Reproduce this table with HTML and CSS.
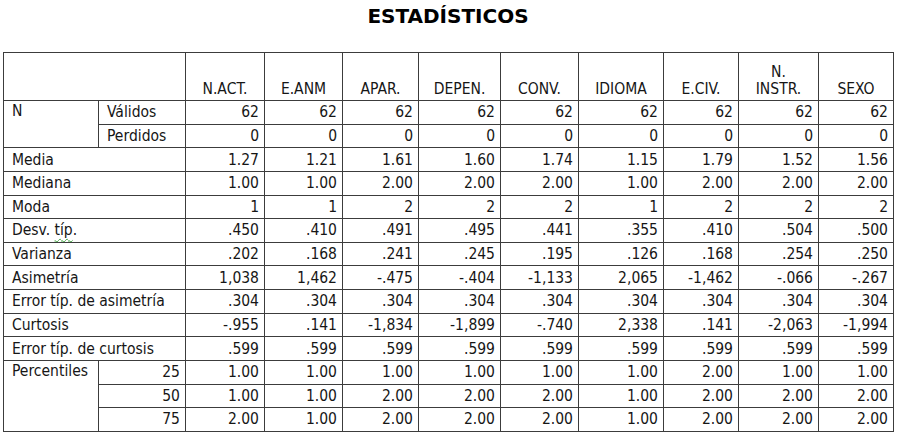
FILE: index.html
```html
<!DOCTYPE html>
<html lang="es">
<head>
<meta charset="utf-8">
<title>Estadísticos</title>
<link rel="stylesheet" href="styles.css">
</head>
<body>
<div class="page">
  <h1 class="title">ESTADÍSTICOS</h1>
  <table class="stats">
    <colgroup>
      <col class="c-a"><col class="c-b">
      <col class="c1"><col class="c2"><col class="c3"><col class="c4"><col class="c5">
      <col class="c6"><col class="c7"><col class="c8"><col class="c9">
    </colgroup>
    <thead>
      <tr class="head">
        <th colspan="2"></th>
        <th>N.ACT.</th><th>E.ANM</th><th>APAR.</th><th>DEPEN.</th><th>CONV.</th>
        <th>IDIOMA</th><th>E.CIV.</th><th>N.<br>INSTR.</th><th>SEXO</th>
      </tr>
    </thead>
    <tbody>
      <tr><td class="lbl top" rowspan="2">N</td><td class="lbl">Válidos</td>
        <td>62</td><td>62</td><td>62</td><td>62</td><td>62</td><td>62</td><td>62</td><td>62</td><td>62</td></tr>
      <tr><td class="lbl">Perdidos</td>
        <td>0</td><td>0</td><td>0</td><td>0</td><td>0</td><td>0</td><td>0</td><td>0</td><td>0</td></tr>
      <tr><td class="lbl" colspan="2">Media</td>
        <td>1.27</td><td>1.21</td><td>1.61</td><td>1.60</td><td>1.74</td><td>1.15</td><td>1.79</td><td>1.52</td><td>1.56</td></tr>
      <tr><td class="lbl" colspan="2">Mediana</td>
        <td>1.00</td><td>1.00</td><td>2.00</td><td>2.00</td><td>2.00</td><td>1.00</td><td>2.00</td><td>2.00</td><td>2.00</td></tr>
      <tr><td class="lbl" colspan="2">Moda</td>
        <td>1</td><td>1</td><td>2</td><td>2</td><td>2</td><td>1</td><td>2</td><td>2</td><td>2</td></tr>
      <tr><td class="lbl" colspan="2">Desv. <span class="spell">típ</span>.</td>
        <td>.450</td><td>.410</td><td>.491</td><td>.495</td><td>.441</td><td>.355</td><td>.410</td><td>.504</td><td>.500</td></tr>
      <tr><td class="lbl" colspan="2">Varianza</td>
        <td>.202</td><td>.168</td><td>.241</td><td>.245</td><td>.195</td><td>.126</td><td>.168</td><td>.254</td><td>.250</td></tr>
      <tr><td class="lbl" colspan="2">Asimetría</td>
        <td>1,038</td><td>1,462</td><td>-.475</td><td>-.404</td><td>-1,133</td><td>2,065</td><td>-1,462</td><td>-.066</td><td>-.267</td></tr>
      <tr><td class="lbl" colspan="2">Error típ. de asimetría</td>
        <td>.304</td><td>.304</td><td>.304</td><td>.304</td><td>.304</td><td>.304</td><td>.304</td><td>.304</td><td>.304</td></tr>
      <tr><td class="lbl" colspan="2">Curtosis</td>
        <td>-.955</td><td>.141</td><td>-1,834</td><td>-1,899</td><td>-.740</td><td>2,338</td><td>.141</td><td>-2,063</td><td>-1,994</td></tr>
      <tr><td class="lbl" colspan="2">Error típ. de curtosis</td>
        <td>.599</td><td>.599</td><td>.599</td><td>.599</td><td>.599</td><td>.599</td><td>.599</td><td>.599</td><td>.599</td></tr>
      <tr><td class="lbl top" rowspan="3">Percentiles</td><td class="pct">25</td>
        <td>1.00</td><td>1.00</td><td>1.00</td><td>1.00</td><td>1.00</td><td>1.00</td><td>2.00</td><td>1.00</td><td>1.00</td></tr>
      <tr><td class="pct">50</td>
        <td>1.00</td><td>1.00</td><td>2.00</td><td>2.00</td><td>2.00</td><td>1.00</td><td>2.00</td><td>2.00</td><td>2.00</td></tr>
      <tr><td class="pct">75</td>
        <td>2.00</td><td>1.00</td><td>2.00</td><td>2.00</td><td>2.00</td><td>1.00</td><td>2.00</td><td>2.00</td><td>2.00</td></tr>
    </tbody>
  </table>
</div>
</body>
</html>
```

FILE: styles.css
```css
html, body {
  margin: 0;
  padding: 0;
  background: #ffffff;
}

.page {
  padding: 0 0 0 3px;
  width: 890px;
  color: #161616;
  font-family: "DejaVu Sans Condensed", "DejaVu Sans", sans-serif;
  font-size: 15.5px;
}

.title {
  margin: 0;
  padding-top: 4px;
  height: 52px;
  box-sizing: border-box;
  text-align: center;
  font-family: "DejaVu Sans", sans-serif;
  font-weight: bold;
  font-size: 20px;
  line-height: 24px;
  color: #000;
}

.stats {
  border-collapse: collapse;
  table-layout: fixed;
  width: 890px;
}

.c-a { width: 95px; }
.c-b { width: 87px; }
.c1 { width: 79px; }
.c2 { width: 78px; }
.c3 { width: 76px; }
.c4 { width: 82px; }
.c5 { width: 78px; }
.c6 { width: 85px; }
.c7 { width: 75px; }
.c8 { width: 80px; }
.c9 { width: 75px; }

.stats th,
.stats td {
  box-sizing: border-box;
  border: 1px solid #3c3c3c;
  padding: 0 5px 0 8px;
  height: 23.64px;
  line-height: 17px;
  white-space: nowrap;
  overflow: hidden;
}

.stats th {
  font-weight: normal;
  text-align: center;
  vertical-align: bottom;
  padding: 0 2px 2px 2px;
}

.stats .head th {
  height: 48px;
}

.stats td {
  text-align: right;
  vertical-align: middle;
  padding-top: 1px;
}

.stats td.lbl {
  text-align: left;
}

.stats td.top {
  vertical-align: top;
  padding-top: 2px;
}

.stats td.pct {
  text-align: right;
  padding-right: 5px;
}

.spell {
  text-decoration: underline wavy #3fa33f;
  text-decoration-thickness: 1px;
  text-underline-offset: 3px;
}
```
